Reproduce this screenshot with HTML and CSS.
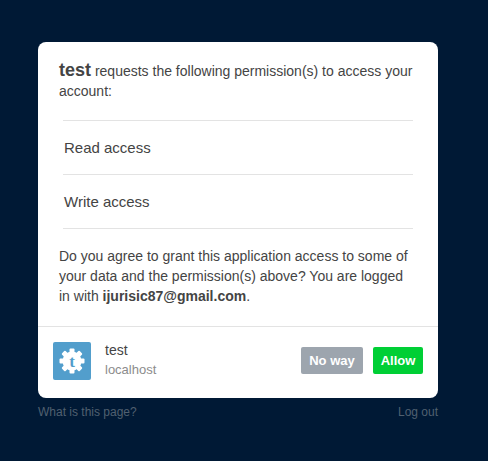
FILE: index.html
```html
<!DOCTYPE html>
<html lang="en">
<head>
    <meta charset="UTF-8">
    <meta name="viewport" content="width=device-width, initial-scale=1.0">
    <title>Authorize application</title>
    <link rel="stylesheet" href="styles.css">
</head>
<body>
    <div class="wrapper">
        <div class="card">
            <div class="card-body">
                <p class="intro"><strong>test</strong> requests the following permission(s) to access your account:</p>
                <ul class="permissions">
                    <li>Read access</li>
                    <li>Write access</li>
                </ul>
                <p class="agree">Do you agree to grant this application access to some of your data and the permission(s) above? You are logged in with <strong>ijurisic87@gmail.com</strong>.</p>
            </div>
            <div class="card-footer">
                <div class="app-icon">
                    <svg viewBox="0 0 38 38" width="38" height="38">
                        <rect width="38" height="38" rx="2" fill="#529ecc"/>
                        <g fill="#fff">
                            <circle cx="19" cy="19" r="9.5"/>
                            <rect x="16.5" y="6.5" width="5" height="25" rx="1"/>
                            <rect x="16.5" y="6.5" width="5" height="25" rx="1" transform="rotate(45 19 19)"/>
                            <rect x="16.5" y="6.5" width="5" height="25" rx="1" transform="rotate(90 19 19)"/>
                            <rect x="16.5" y="6.5" width="5" height="25" rx="1" transform="rotate(135 19 19)"/>
                        </g>
                        <text x="19" y="25" class="app-letter">t</text>
                    </svg>
                </div>
                <div class="app-info">
                    <div class="app-name">test</div>
                    <div class="app-host">localhost</div>
                </div>
                <div class="actions">
                    <button class="btn btn-deny">No way</button>
                    <button class="btn btn-allow">Allow</button>
                </div>
            </div>
        </div>
        <div class="links">
            <a href="#">What is this page?</a>
            <a href="#">Log out</a>
        </div>
    </div>
</body>
</html>
```

FILE: styles.css
```css
body {
    margin: 0;
    background-color: #001935;
    font-family: "Liberation Sans", Arial, sans-serif;
    color: #444;
}
.wrapper {
    width: 400px;
    margin: 42px 0 0 38px;
}
.card {
    background: #fff;
    border-radius: 8px;
}
.card-body {
    padding: 18px 25px 20px 21px;
}
.intro {
    margin: 0;
    font-size: 14px;
    line-height: 20px;
}
.intro strong {
    font-size: 18px;
}
.permissions {
    list-style: none;
    margin: 19px 0 0 4px;
    padding: 0;
    border-top: 1px solid #e3e3e3;
}
.permissions li {
    height: 53px;
    line-height: 53px;
    font-size: 15px;
    padding-left: 1px;
    border-bottom: 1px solid #e3e3e3;
}
.agree {
    margin: 17px 0 0;
    font-size: 14px;
    line-height: 20px;
}
.card-footer {
    display: flex;
    align-items: center;
    padding: 15px 15px 18px;
    border-top: 1px solid #e3e3e3;
}
.app-icon {
    width: 38px;
    height: 38px;
}
.app-icon svg {
    display: block;
}
.app-letter {
    font-family: "Liberation Serif", serif;
    font-size: 17px;
    font-weight: bold;
    fill: #529ecc;
    text-anchor: middle;
}
.app-info {
    margin: -3px 0 0 14px;
    font-size: 14px;
    line-height: 19px;
}
.app-host {
    font-size: 13px;
    color: #8c8c8c;
}
.actions {
    display: flex;
    gap: 10px;
    margin: -1px 0 0 auto;
}
.btn {
    height: 27px;
    padding: 0;
    border: 0;
    border-radius: 2px;
    color: #fff;
    font-family: inherit;
    font-size: 13px;
    font-weight: bold;
}
.btn-deny {
    width: 62px;
    background: #9da5ae;
}
.btn-allow {
    width: 50px;
    background: #00cf35;
}
.links {
    display: flex;
    justify-content: space-between;
    margin-top: 7px;
    font-size: 12px;
    line-height: 14px;
}
.links a {
    color: #506070;
    text-decoration: none;
}
```
